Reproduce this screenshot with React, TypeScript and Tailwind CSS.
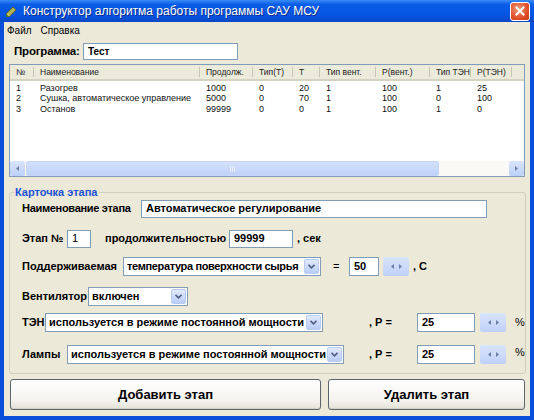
import React from "react";

const cols = [
  { label: "№", w: 24 },
  { label: "Наименование", w: 166 },
  { label: "Продолж.", w: 53 },
  { label: "Тип(Т)", w: 40 },
  { label: "Т", w: 27 },
  { label: "Тип вент.", w: 56 },
  { label: "P(вент.)", w: 54 },
  { label: "Тип ТЭН", w: 41 },
  { label: "P(ТЭН)", w: 41 },
];

const rows = [
  ["1", "Разогрев", "1000", "0", "20", "1", "100", "1", "25"],
  ["2", "Сушка, автоматическое управление", "5000", "0", "70", "1", "100", "0", "100"],
  ["3", "Останов", "99999", "0", "0", "1", "100", "1", "0"],
];

function Chevron() {
  return (
    <svg width="7" height="5" viewBox="0 0 7 5">
      <path d="M0.5 0.8 L3.5 3.8 L6.5 0.8" fill="none" stroke="#4D6185" strokeWidth="1.6" />
    </svg>
  );
}

function TextBox({ w, h = 18, value, className = "" }: { w: number; h?: number; value: string; className?: string }) {
  return (
    <div
      className={`flex shrink-0 items-center border border-[#7F9DB9] bg-white pl-[4px] text-[11px] font-bold text-black ${className}`}
      style={{ width: w, height: h }}
    >
      {value}
    </div>
  );
}

function Combo({ w, value, tight = false }: { w: number; value: string; tight?: boolean }) {
  return (
    <div
      className={`flex h-[19px] shrink-0 items-center border border-[#7F9DB9] bg-white pl-[3px] text-[11px] font-bold text-black ${tight ? "tracking-[-0.35px]" : ""}`}
      style={{ width: w }}
    >
      <span className="flex-1 overflow-hidden whitespace-nowrap">{value}</span>
      <div className="m-[1px] flex h-[15px] w-[15px] shrink-0 items-center justify-center rounded-[2px] border border-[#B9CCF4] bg-[linear-gradient(#E0E9FD,#BACDF6)]">
        <Chevron />
      </div>
    </div>
  );
}

function Arrow({ dir }: { dir: "l" | "r" }) {
  return (
    <svg width="3" height="5" viewBox="0 0 3 5">
      <path d={dir === "l" ? "M3 0 L0 2.5 L3 5 Z" : "M0 0 L3 2.5 L0 5 Z"} fill="#6A7FA8" />
    </svg>
  );
}

function Spin({ h = 19 }: { h?: number }) {
  return (
    <div
      className="flex w-[26px] shrink-0 items-center justify-center gap-[5px] rounded-[2px] bg-[linear-gradient(#D9E4FC,#BFD1F8)]"
      style={{ height: h }}
    >
      <Arrow dir="l" />
      <Arrow dir="r" />
    </div>
  );
}

function Label({ w, children, className = "" }: { w?: number; children: React.ReactNode; className?: string }) {
  return (
    <span className={`shrink-0 text-[11px] font-bold text-black ${className}`} style={w ? { width: w } : undefined}>
      {children}
    </span>
  );
}

function XpButton({ w, children }: { w: number; children: React.ReactNode }) {
  return (
    <div
      className="flex h-[31px] shrink-0 items-center justify-center rounded-[3px] border border-[#5C6470] bg-[linear-gradient(#FFFFFF,#F4F3EE_70%,#E3E1D7)] text-[13px] font-bold text-black shadow-[inset_0_-1px_0_#D6D0C5]"
      style={{ width: w }}
    >
      {children}
    </div>
  );
}

export default function App() {
  return (
    <div className="flex h-[420px] w-[534px] flex-col bg-[#0A4FD9] font-['Liberation_Sans',Arial,sans-serif] select-none">
      {/* title bar */}
      <div className="flex h-[22px] shrink-0 items-center bg-[linear-gradient(#3A8CF5,#0A5DE8_20%,#0553E2_70%,#0B48C4)] pl-[5px] pr-[4px]">
        <svg width="13" height="13" viewBox="0 0 13 13" className="shrink-0">
          <path d="M1 9 L8 2 L11 5 L4 12 Z" fill="#C9C45A" stroke="#5B5A22" strokeWidth="0.8" />
          <path d="M3 8.5 L8.5 3 M4.5 10 L10 4.5" stroke="#7E8A3A" strokeWidth="0.9" />
          <path d="M1 9 L4 12 L1 12 Z" fill="#3D7A3A" />
        </svg>
        <span className="ml-[5px] text-[12px] text-white [text-shadow:1px_1px_0_#0A2C8A]">
          Конструктор алгоритма работы программы САУ МСУ
        </span>
        <div className="ml-auto flex h-[19px] w-[20px] items-center justify-center rounded-[3px] border border-white bg-[radial-gradient(circle_at_40%_35%,#F09A7A,#E0502A_60%,#C23A14)]">
          <svg width="10" height="10" viewBox="0 0 10 10">
            <path d="M1.5 1.5 L8.5 8.5 M8.5 1.5 L1.5 8.5" stroke="white" strokeWidth="2" strokeLinecap="square" />
          </svg>
        </div>
      </div>

      {/* client area */}
      <div className="mx-[4px] mb-[4px] flex flex-1 flex-col bg-[#ECE9D8]">
        {/* menu */}
        <div className="flex h-[16px] items-center gap-[9px] pl-[3px] text-[10px] text-black">
          <span>Файл</span>
          <span>Справка</span>
        </div>

        {/* program */}
        <div className="mt-[5px] flex h-[17px] items-center pl-[10px]">
          <span className="w-[69px] shrink-0 text-[11.5px] font-bold tracking-[-0.2px] text-black">Программа:</span>
          <div className="flex h-[17px] w-[155px] items-center border border-[#7F9DB9] bg-white pl-[4px] text-[10px] font-bold text-black">
            Тест
          </div>
        </div>

        {/* list view */}
        <div className="ml-[5px] mt-[4px] flex h-[113px] w-[516px] flex-col border border-[#7F9DB9] bg-white">
          <div className="flex h-[16px] shrink-0 bg-[#EBEADB] shadow-[inset_0_-2px_0_#D6D2C2]">
            {cols.map((c, i) => (
              <div
                key={i}
                className="flex h-[14px] shrink-0 items-center pl-[6px] text-[8.5px] text-[#222]"
                style={{ width: c.w }}
              >
                <span className="flex-1 overflow-hidden whitespace-nowrap">{c.label}</span>
                <span className="h-[10px] w-[1px] shrink-0 bg-[#C7C5B2]" />
              </div>
            ))}
          </div>
          <div className="flex flex-1 flex-col pt-[2px]">
            {rows.map((r, ri) => (
              <div key={ri} className="flex h-[10.5px] items-center">
                {r.map((v, ci) => (
                  <div
                    key={ci}
                    className="shrink-0 overflow-hidden whitespace-nowrap pl-[6px] text-[9px] leading-none text-[#111]"
                    style={{ width: cols[ci].w }}
                  >
                    {v}
                  </div>
                ))}
              </div>
            ))}
          </div>
          {/* horizontal scrollbar */}
          <div className="flex h-[15px] shrink-0 items-center bg-[#FAF9F5]">
            <div className="flex h-[15px] w-[15px] items-center justify-center rounded-[2px] bg-[linear-gradient(#D9E4FC,#BCD0F8)]">
              <Arrow dir="l" />
            </div>
            <div className="ml-[1px] flex h-[15px] w-[413px] items-center justify-center rounded-[2px] border border-[#C6D5F6] bg-[linear-gradient(#D3E0FC,#C0D2F9)]">
              <div className="flex gap-[1px]">
                <span className="h-[6px] w-[1px] bg-[#E8EEFD]" />
                <span className="h-[6px] w-[1px] bg-[#E8EEFD]" />
                <span className="h-[6px] w-[1px] bg-[#E8EEFD]" />
              </div>
            </div>
            <div className="flex-1" />
            <div className="flex h-[15px] w-[15px] items-center justify-center rounded-[2px] bg-[linear-gradient(#D9E4FC,#BCD0F8)]">
              <Arrow dir="r" />
            </div>
          </div>
        </div>

        {/* stage card */}
        <fieldset className="ml-[5px] mt-[7px] h-[190px] w-[516px] rounded-[3px] border border-[#D0D0BF] pl-[12px]">
          <legend className="-ml-[8px] px-[1px] text-[11px] font-bold text-[#1C52D6]">Карточка этапа</legend>

          <div className="-mt-[1px] flex h-[18px] items-center">
            <Label w={119} className="tracking-[-0.3px]">Наименование этапа</Label>
            <TextBox w={346} value="Автоматическое регулирование" />
          </div>

          <div className="mt-[12px] flex h-[18px] items-center">
            <Label w={45}>Этап №</Label>
            <TextBox w={24} value="1" className="!font-normal" />
            <Label w={124} className="ml-[14px]">продолжительностью</Label>
            <TextBox w={64} value="99999" />
            <Label className="ml-[4px]">, сек</Label>
          </div>

          <div className="mt-[9px] flex h-[19px] items-center">
            <Label w={101}>Поддерживаемая</Label>
            <Combo w={198} value="температура поверхности сырья" tight />
            <Label w={28} className="pl-[12px] !font-normal">=</Label>
            <TextBox w={30} h={19} value="50" />
            <div className="ml-[4px]">
              <Spin />
            </div>
            <Label className="ml-[4px]">, С</Label>
          </div>

          <div className="mt-[11px] flex h-[19px] items-center">
            <Label w={66}>Вентилятор</Label>
            <Combo w={100} value="включен" />
          </div>

          <div className="mt-[7px] flex h-[19px] items-center">
            <Label w={23}>ТЭН</Label>
            <Combo w={278} value="используется в режиме постоянной мощности" />
            <Label w={48} className="ml-[46px]">, Р =</Label>
            <TextBox w={58} h={19} value="25" />
            <div className="ml-[5px]">
              <Spin />
            </div>
            <Label className="ml-[9px] !font-normal">%</Label>
          </div>

          <div className="mt-[13px] flex h-[19px] items-center">
            <Label w={45}>Лампы</Label>
            <Combo w={277} value="используется в режиме постоянной мощности" />
            <Label w={48} className="ml-[25px]">, Р =</Label>
            <TextBox w={58} h={19} value="25" />
            <div className="ml-[5px]">
              <Spin />
            </div>
            <Label className="ml-[9px] -mt-[4px] !font-normal">%</Label>
          </div>
        </fieldset>

        {/* buttons */}
        <div className="ml-[6px] mt-[5px] flex gap-[7px]">
          <XpButton w={311}>Добавить этап</XpButton>
          <XpButton w={197}>Удалить этап</XpButton>
        </div>
      </div>
    </div>
  );
}
